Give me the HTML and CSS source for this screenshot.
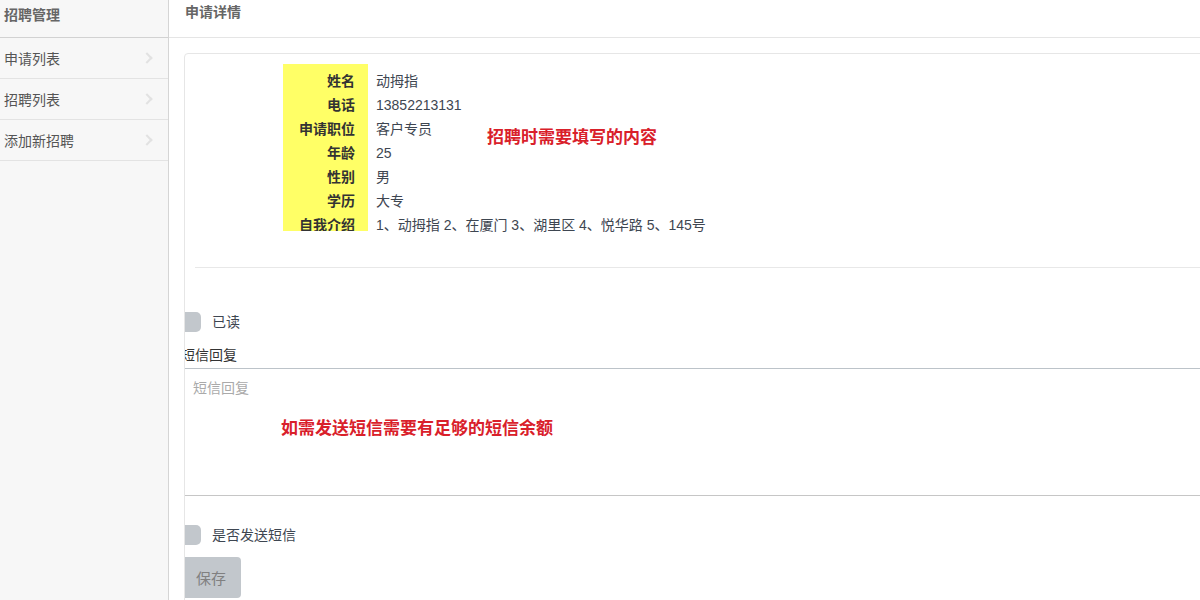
FILE: index.html
```html
<!DOCTYPE html>
<html lang="zh-CN">
<head>
    <meta charset="UTF-8">
    <title>申请详情</title>
    <link rel="stylesheet" href="styles.css">
</head>
<body>
    <div class="layout">
        <div class="sidebar">
            <div class="side-title">招聘管理</div>
            <a class="side-item" href="#">申请列表<span class="chevron"></span></a>
            <a class="side-item" href="#">招聘列表<span class="chevron"></span></a>
            <a class="side-item" href="#">添加新招聘<span class="chevron"></span></a>
        </div>

        <div class="main">
            <div class="main-title">申请详情</div>

            <div class="panel">
                <div class="info">
                    <div class="info-labels">
                        <div>姓名</div>
                        <div>电话</div>
                        <div>申请职位</div>
                        <div>年龄</div>
                        <div>性别</div>
                        <div>学历</div>
                        <div>自我介绍</div>
                    </div>
                    <div class="info-values">
                        <div>动拇指</div>
                        <div>13852213131</div>
                        <div>客户专员</div>
                        <div>25</div>
                        <div>男</div>
                        <div>大专</div>
                        <div>1、动拇指 2、在厦门 3、湖里区 4、悦华路 5、145号</div>
                    </div>
                    <span class="note note-info">招聘时需要填写的内容</span>
                </div>

                <div class="divider"></div>

                <div class="form">
                    <label class="check-row"><span class="check"></span>已读</label>
                    <div class="field-label">短信回复</div>
                    <div class="reply">
                        <textarea placeholder="短信回复"></textarea>
                        <span class="note note-sms">如需发送短信需要有足够的短信余额</span>
                    </div>
                    <label class="check-row check-send"><span class="check"></span>是否发送短信</label>
                    <button class="btn-save">保存</button>
                </div>
            </div>
        </div>
    </div>
</body>
</html>
```

FILE: styles.css
```css
html, body {
    margin: 0;
    padding: 0;
    height: 100%;
    overflow: hidden;
}

body {
    font-family: "Liberation Sans", "Noto Sans CJK SC", sans-serif;
    font-size: 14px;
    color: #3e4651;
    background-color: #fff;
}

.layout {
    display: flex;
    height: 600px;
}

/* 左侧菜单 */
.sidebar {
    width: 168px;
    flex-shrink: 0;
    background-color: #f7f7f7;
    border-right: 1px solid #d5d5d5;
}

.side-title {
    height: 37px;
    line-height: 30px;
    padding-left: 4px;
    font-weight: bold;
    color: #666;
    border-bottom: 1px solid #d2d2d2;
}

.side-item {
    position: relative;
    display: block;
    height: 40px;
    line-height: 42px;
    padding-left: 4px;
    color: #555;
    text-decoration: none;
    border-bottom: 1px solid #e3e3e3;
}

.chevron {
    position: absolute;
    right: 17px;
    top: 16px;
    width: 6px;
    height: 6px;
    border-top: 2px solid #e2e2e2;
    border-right: 2px solid #e2e2e2;
    transform: rotate(45deg);
}

/* 右侧内容 */
.main {
    flex: 1;
    min-width: 0;
    overflow: hidden;
}

.main-title {
    height: 37px;
    line-height: 24px;
    padding-left: 16px;
    font-weight: bold;
    color: #666;
    border-bottom: 1px solid #e5e5e5;
}

.panel {
    margin: 15px -20px 0 15px;
    height: 600px;
    border: 1px solid #e6e6e6;
    border-radius: 4px;
    overflow: hidden;
}

.info {
    position: relative;
    display: flex;
    align-items: flex-start;
    height: 167px;
    margin: 10px 0 0 98px;
    line-height: 24px;
}

.info-labels {
    width: 72px;
    height: 162px;
    padding: 5px 13px 0 0;
    text-align: right;
    font-weight: bold;
    color: #333;
    background-color: #ffff66;
    overflow: hidden;
}

.info-values {
    padding: 5px 0 0 8px;
}

.note {
    position: absolute;
    font-size: 17px;
    font-weight: bold;
    color: #d9202a;
    white-space: nowrap;
}

.note-info {
    left: 204px;
    top: 62px;
}

.divider {
    margin: 36px 0 0 10px;
    border-top: 1px solid #e8e8e8;
}

.form {
    margin-left: -4px;
}

.check-row {
    display: flex;
    align-items: center;
    height: 20px;
    margin-top: 44px;
    line-height: 20px;
}

.check {
    width: 20px;
    height: 20px;
    margin-right: 11px;
    background-color: #c2c7cc;
    border-radius: 5px;
}

.field-label {
    margin-top: 12px;
    line-height: 22px;
    color: #333;
}

.reply {
    position: relative;
    margin-top: 2px;
}

textarea {
    display: block;
    box-sizing: border-box;
    width: 100%;
    height: 128px;
    margin: 0;
    padding: 8px 12px;
    font-family: inherit;
    font-size: 14px;
    line-height: 22px;
    border: none;
    border-top: 1px solid #bcc3c9;
    border-bottom: 1px solid #c6c6c6;
    resize: none;
    outline: none;
}

textarea::placeholder {
    color: #aaa;
}

.note-sms {
    left: 100px;
    top: 46px;
}

.check-send {
    margin-top: 29px;
}

.btn-save {
    display: block;
    width: 60px;
    height: 41px;
    margin-top: 12px;
    padding: 0;
    font-family: inherit;
    font-size: 15px;
    color: #808080;
    background-color: #c2c7cc;
    border: none;
    border-radius: 4px;
}
```
